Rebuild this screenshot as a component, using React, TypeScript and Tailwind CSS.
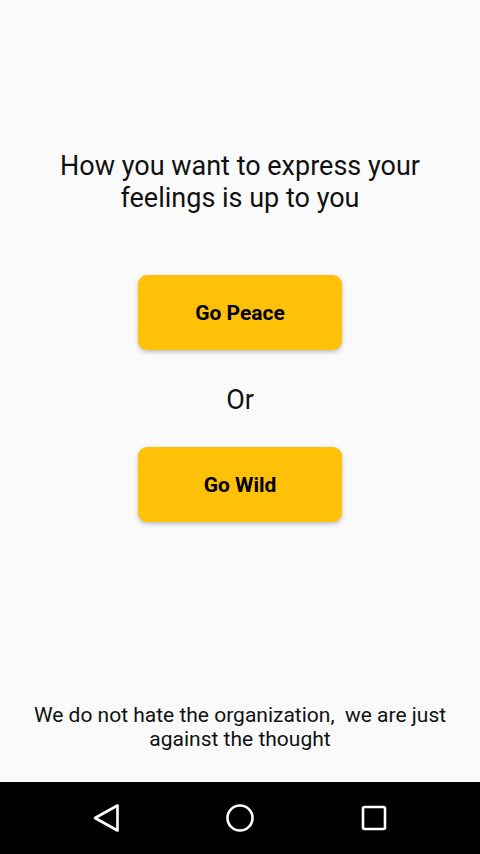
import React from "react";

export default function App() {
  const font = { fontFamily: "Roboto, 'Liberation Sans', sans-serif" };
  return (
    <div className="w-[480px] h-[854px] flex flex-col bg-[#fafafa]" style={font}>
      <div className="h-[782px] flex flex-col items-center pt-[150px]">
        <h1 className="text-[27px] leading-[32px] text-[#111] text-center font-normal">
          How you want to express your
          <br />
          feelings is up to you
        </h1>
        <button className="mt-[61px] w-[204px] h-[75px] pt-[3px] rounded-[9px] bg-[#ffc107] shadow-[0_2px_4px_rgba(0,0,0,0.25)] text-[21px] font-bold text-black">
          Go Peace
        </button>
        <div className="mt-[34px] text-[27px] leading-[32px] text-[#111]">Or</div>
        <button className="mt-[31px] w-[204px] h-[75px] pt-[3px] rounded-[9px] bg-[#ffc107] shadow-[0_2px_4px_rgba(0,0,0,0.25)] text-[21px] font-bold text-black">
          Go Wild
        </button>
        <p className="mt-auto pb-[31px] text-[21px] leading-[24px] text-[#111] text-center whitespace-pre">
          {"We do not hate the organization,  we are just\nagainst the thought"}
        </p>
      </div>
      <div className="h-[72px] bg-black flex items-center">
        <div className="flex-1 flex justify-center">
          <svg width="30" height="30" viewBox="0 0 30 30" className="ml-[-12px]">
            <path d="M25.5 2.5 L3 15 L25.5 27.5 Z" fill="none" stroke="white" strokeWidth="2.6" strokeLinejoin="round" />
          </svg>
        </div>
        <div className="flex justify-center">
          <svg width="30" height="30" viewBox="0 0 30 30">
            <circle cx="15" cy="15" r="12.5" fill="none" stroke="white" strokeWidth="2.6" />
          </svg>
        </div>
        <div className="flex-1 flex justify-center">
          <svg width="26" height="26" viewBox="0 0 26 26" className="ml-[12px]">
            <rect x="2" y="2" width="22" height="22" rx="1.5" fill="none" stroke="white" strokeWidth="2.6" />
          </svg>
        </div>
      </div>
    </div>
  );
}
